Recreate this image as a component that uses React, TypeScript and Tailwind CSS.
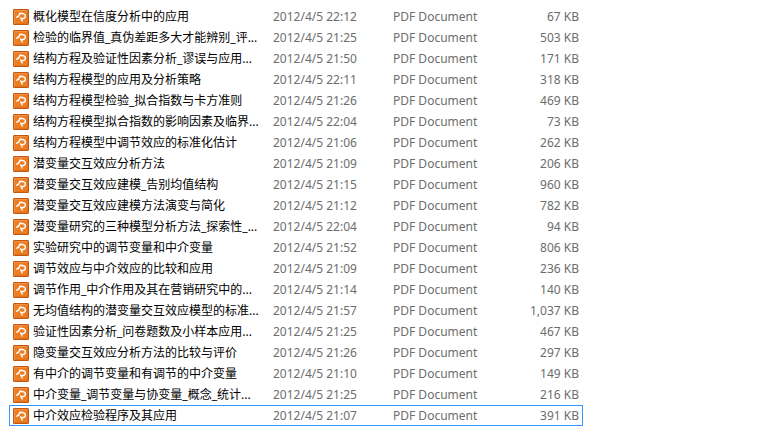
const files = [
  { name: "概化模型在信度分析中的应用", date: "2012/4/5 22:12", size: "67 KB" },
  { name: "检验的临界值_真伪差距多大才能辨别_评...", date: "2012/4/5 21:25", size: "503 KB" },
  { name: "结构方程及验证性因素分析_谬误与应用...", date: "2012/4/5 21:50", size: "171 KB" },
  { name: "结构方程模型的应用及分析策略", date: "2012/4/5 22:11", size: "318 KB" },
  { name: "结构方程模型检验_拟合指数与卡方准则", date: "2012/4/5 21:26", size: "469 KB" },
  { name: "结构方程模型拟合指数的影响因素及临界...", date: "2012/4/5 22:04", size: "73 KB" },
  { name: "结构方程模型中调节效应的标准化估计", date: "2012/4/5 21:06", size: "262 KB" },
  { name: "潜变量交互效应分析方法", date: "2012/4/5 21:09", size: "206 KB" },
  { name: "潜变量交互效应建模_告别均值结构", date: "2012/4/5 21:15", size: "960 KB" },
  { name: "潜变量交互效应建模方法演变与简化", date: "2012/4/5 21:12", size: "782 KB" },
  { name: "潜变量研究的三种模型分析方法_探索性_...", date: "2012/4/5 22:04", size: "94 KB" },
  { name: "实验研究中的调节变量和中介变量", date: "2012/4/5 21:52", size: "806 KB" },
  { name: "调节效应与中介效应的比较和应用", date: "2012/4/5 21:09", size: "236 KB" },
  { name: "调节作用_中介作用及其在营销研究中的...", date: "2012/4/5 21:14", size: "140 KB" },
  { name: "无均值结构的潜变量交互效应模型的标准...", date: "2012/4/5 21:57", size: "1,037 KB" },
  { name: "验证性因素分析_问卷题数及小样本应用...", date: "2012/4/5 21:25", size: "467 KB" },
  { name: "隐变量交互效应分析方法的比较与评价", date: "2012/4/5 21:26", size: "297 KB" },
  { name: "有中介的调节变量和有调节的中介变量", date: "2012/4/5 21:10", size: "149 KB" },
  { name: "中介变量_调节变量与协变量_概念_统计...", date: "2012/4/5 21:25", size: "216 KB" },
  { name: "中介效应检验程序及其应用", date: "2012/4/5 21:07", size: "391 KB" },
];

const focusedFile = "中介效应检验程序及其应用";

function PdfIcon() {
  return (
    <svg className="size-4 shrink-0" viewBox="0 0 16 16" fill="none" aria-hidden="true">
      <rect x="0.5" y="0.5" width="15" height="15" rx="0.5" fill="#ee7d22" stroke="#c4570f" />
      <path d="M1.5 14.5V1.5H14.5" stroke="#f2914a" />
      <path d="M14.5 2V14.5H2" stroke="#e0731f" />
      <path
        d="M3.8 8.2C5.6 7.6 6.6 6.4 6.8 4.2C9.4 4.2 12.4 5.2 12.4 7C12.4 8.4 10.8 9.6 8.6 9.8"
        stroke="#fff"
        strokeWidth="1.4"
        strokeLinecap="round"
        strokeLinejoin="round"
      />
      <path
        d="M7.6 8.8L9.2 12"
        stroke="#fff"
        strokeWidth="1.3"
        strokeLinecap="round"
      />
    </svg>
  );
}

export default function App() {
  return (
    <main className="min-h-screen bg-white px-[9px] py-1.5 font-['Noto_Sans','Noto_Sans_CJK_SC',sans-serif] text-xs">
      <table className="w-full max-w-[574px] table-fixed border-collapse">
        <colgroup>
          <col className="w-[264px]" />
          <col className="w-[120px]" />
          <col className="w-[110px]" />
          <col />
        </colgroup>
        <tbody>
          {files.map((file) => (
            <tr
              key={file.name}
              className={
                file.name === focusedFile
                  ? "h-[21px] outline outline-[#3399ff] -outline-offset-1"
                  : "h-[21px]"
              }
            >
              <td className="p-0 pl-1 text-black">
                <div className="flex h-[21px] items-center gap-1">
                  <PdfIcon />
                  <span className="leading-4 whitespace-nowrap">{file.name}</span>
                </div>
              </td>
              <td className="p-0 leading-4 whitespace-nowrap text-[#6d6d6d]">{file.date}</td>
              <td className="p-0 leading-4 whitespace-nowrap text-[#6d6d6d]">PDF Document</td>
              <td className="p-0 pr-1 text-right leading-4 whitespace-nowrap text-[#6d6d6d]">
                {file.size}
              </td>
            </tr>
          ))}
        </tbody>
      </table>
    </main>
  );
}
